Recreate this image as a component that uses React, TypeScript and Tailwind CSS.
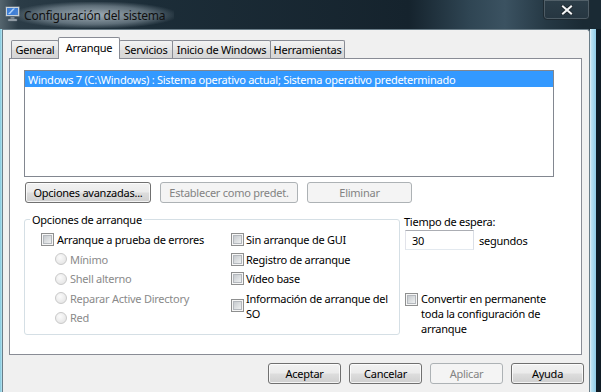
import React from "react";

function cx(...a: (string | false | undefined)[]) {
  return a.filter(Boolean).join(" ");
}

function CheckBox() {
  return (
    <span className="w-[13px] h-[13px] border border-[#8e8f8f] bg-[#f6f6f6] flex items-center justify-center shrink-0">
      <span className="w-[9px] h-[9px] border border-[#b4b8bd] bg-[linear-gradient(135deg,#c6cace,#eef0f1)]" />
    </span>
  );
}

function Radio() {
  return (
    <span className="w-[12px] h-[12px] rounded-full border border-[#c9c9c9] bg-[radial-gradient(circle_at_40%_35%,#fbfbfb,#e0e0e0)] shrink-0" />
  );
}

function Btn({
  children,
  disabled,
  className,
}: {
  children: React.ReactNode;
  disabled?: boolean;
  className?: string;
}) {
  return (
    <div
      className={cx(
        "h-[21px] rounded-[3px] border flex items-center justify-center shrink-0",
        disabled
          ? "border-[#adb2b5] bg-[#f4f4f4] text-[#838383]"
          : "border-[#707070] bg-[linear-gradient(#f2f2f2_0%,#ebebeb_48%,#dddddd_52%,#cfcfcf_100%)] text-black shadow-[inset_0_0_0_1px_rgba(255,255,255,0.75)]",
        className
      )}
    >
      {children}
    </div>
  );
}

function Tab({
  label,
  w,
  selected,
}: {
  label: string;
  w: string;
  selected?: boolean;
}) {
  return (
    <div
      className={cx(
        "flex items-center justify-center border border-[#898c95] rounded-t-[2px] -ml-px",
        w,
        selected
          ? "h-[22px] bg-white border-b-0 z-10 mb-[-1px] pb-[3px]"
          : "h-[18px] border-b-0 bg-[linear-gradient(#f3f3f3,#e6e6e6_50%,#dcdcdc_51%,#d6d6d6)]"
      )}
    >
      {label}
    </div>
  );
}

function MonitorIcon() {
  return (
    <svg width="17" height="17" viewBox="0 0 17 17">
      <rect x="1.5" y="1.5" width="14" height="10" rx="1" fill="#c9d3da" stroke="#5c6a75" />
      <rect x="3" y="3" width="11" height="7" fill="#3f7fd6" />
      <path d="M4 9 L9 3.5 L11 3.5 L6 9 Z" fill="#b9dcff" opacity="0.9" />
      <rect x="6.5" y="12" width="4" height="2" fill="#7e8a93" />
      <rect x="4" y="14" width="9" height="2" rx="0.5" fill="#a9b3ba" stroke="#5c6a75" strokeWidth="0.6" />
    </svg>
  );
}

export default function App() {
  return (
    <div className="w-[601px] h-[392px] overflow-hidden flex flex-col bg-[#15232d] font-['Noto_Sans',sans-serif] text-[11px] leading-[15px] tracking-[-0.25px] text-black">
      {/* Title bar */}
      <div className="h-[29px] shrink-0 flex items-start bg-[linear-gradient(90deg,#55656e_0%,#2b3c47_3%,#1c2d38_25%,#15232d_68%,#2f4553_78%,#3b5261_84%,#253844_91%,#1a2a34_97%)]">
        <div className="mt-[5px] ml-[4px]">
          <MonitorIcon />
        </div>
        <div className="mt-[2px] ml-[-6px] px-[9px] h-[26px] flex items-center bg-[radial-gradient(ellipse_at_center,rgba(200,212,220,0.75)_0%,rgba(170,185,195,0.45)_50%,rgba(140,160,170,0)_75%)]">
          <span className="text-[12px] text-[#101010] tracking-[-0.2px]">Configuración del sistema</span>
        </div>
        <div className="flex-1" />
        <div className="w-[47px] h-[21px] mt-[-1px] mr-[11px] rounded-b-[4px] border border-[#1e2a32] shadow-[inset_0_0_0_1px_rgba(255,255,255,0.18)] bg-[linear-gradient(#2c3d48,#263641)] flex items-center justify-center">
          <svg width="12" height="10" viewBox="0 0 12 10">
            <path d="M2 1.5 L10 8.5 M10 1.5 L2 8.5" stroke="#1a2228" strokeWidth="3.6" strokeLinecap="square" />
            <path d="M2 1.5 L10 8.5 M10 1.5 L2 8.5" stroke="#f4f6f8" strokeWidth="2.1" strokeLinecap="square" />
          </svg>
        </div>
      </div>

      {/* Body */}
      <div className="flex flex-1 min-h-0">
        <div className="w-[2px] bg-[linear-gradient(90deg,#7fc4db,#b9e6f2)]" />
        <div className="flex-1 flex flex-col bg-[#f0f0f0] border-l border-t border-r border-[#6a7d88] rounded-tr-[3px]">
          {/* Tabs area */}
          <div className="pl-[6px] pr-[7px] pt-[7px] flex flex-col">
            <div className="h-[21px] flex items-end pl-[3px]">
              <Tab label="General" w="w-[48px]" />
              <Tab label="Arranque" w="w-[62px]" selected />
              <Tab label="Servicios" w="w-[54px]" />
              <Tab label="Inicio de Windows" w="w-[99px]" />
              <Tab label="Herramientas" w="w-[75px]" />
            </div>
            {/* Panel */}
            <div className="h-[297px] border border-[#898c95] bg-white flex flex-col">
              {/* List box */}
              <div className="mt-[11px] ml-[14px] w-[530px] h-[107px] border border-[#828790] bg-white flex flex-col">
                <div className="h-[16px] bg-[#3399ff] text-white pl-[3px] flex items-center whitespace-nowrap">
                  Windows 7 (C:\Windows) : Sistema operativo actual; Sistema operativo predeterminado
                </div>
              </div>
              {/* Buttons row */}
              <div className="mt-[5px] flex items-center">
                <Btn className="ml-[15px] w-[126px]">Opciones avanzadas...</Btn>
                <Btn disabled className="ml-[9px] w-[138px]">
                  Establecer como predet.
                </Btn>
                <Btn disabled className="ml-[9px] w-[105px]">
                  Eliminar
                </Btn>
              </div>
              {/* Lower section */}
              <div className="mt-[9px] flex items-start">
                <fieldset className="ml-[14px] w-[376px] h-[123px] border border-[#d5dfe5] rounded-[3px] px-0 pb-0">
                  <legend className="ml-[5px] px-[2px] leading-[15px]">Opciones de arranque</legend>
                  <div className="flex pt-[3px]">
                    <div className="w-[206px] flex flex-col pl-[16px]">
                      <div className="h-[19.5px] flex items-center gap-[3px]">
                        <CheckBox />
                        <span>Arranque a prueba de errores</span>
                      </div>
                      {["Mínimo", "Shell alterno", "Reparar Active Directory", "Red"].map((t) => (
                        <div key={t} className="h-[19.5px] flex items-center gap-[3px] pl-[14px] text-[#8a8a8a]">
                          <Radio />
                          <span>{t}</span>
                        </div>
                      ))}
                    </div>
                    <div className="flex flex-col">
                      {["Sin arranque de GUI", "Registro de arranque", "Vídeo base"].map((t) => (
                        <div key={t} className="h-[19.5px] flex items-center gap-[2px]">
                          <CheckBox />
                          <span>{t}</span>
                        </div>
                      ))}
                      <div className="mt-[2px] flex items-center gap-[2px]">
                        <CheckBox />
                        <span className="w-[150px]">Información de arranque del SO</span>
                      </div>
                    </div>
                  </div>
                </fieldset>
                <div className="ml-[4px] flex flex-col">
                  <div className="leading-[15px] mt-[2px]">Tiempo de espera:</div>
                  <div className="mt-[1px] flex items-center">
                    <div className="ml-[1px] w-[69px] h-[20px] border border-[#abadb3] border-r-[#dbdfe6] border-b-[#e3e9ef] border-l-[#e2e3ea] bg-white pl-[6px] flex items-center">
                      30
                    </div>
                    <span className="ml-[5px]">segundos</span>
                  </div>
                  <div className="mt-[41px] ml-[1px] flex items-start gap-[3px]">
                    <span className="mt-[2px]">
                      <CheckBox />
                    </span>
                    <span className="w-[140px]">
                      Convertir en permanente toda la configuración de arranque
                    </span>
                  </div>
                </div>
              </div>
            </div>
          </div>
          {/* Bottom buttons */}
          <div className="mt-[8px] pr-[5px] flex justify-end gap-[8px]">
            <Btn className="w-[73px]">Aceptar</Btn>
            <Btn className="w-[73px]">Cancelar</Btn>
            <Btn disabled className="w-[73px]">
              Aplicar
            </Btn>
            <Btn className="w-[73px]">Ayuda</Btn>
          </div>
        </div>
        <div className="w-[11px] flex">
          <div className="w-[1px] bg-[#d9eef6]" />
          <div className="w-[5px] bg-[linear-gradient(90deg,#bfe4f3,#8fcbe6)]" />
          <div className="flex-1 bg-[#0f1c25]" />
        </div>
      </div>
    </div>
  );
}
